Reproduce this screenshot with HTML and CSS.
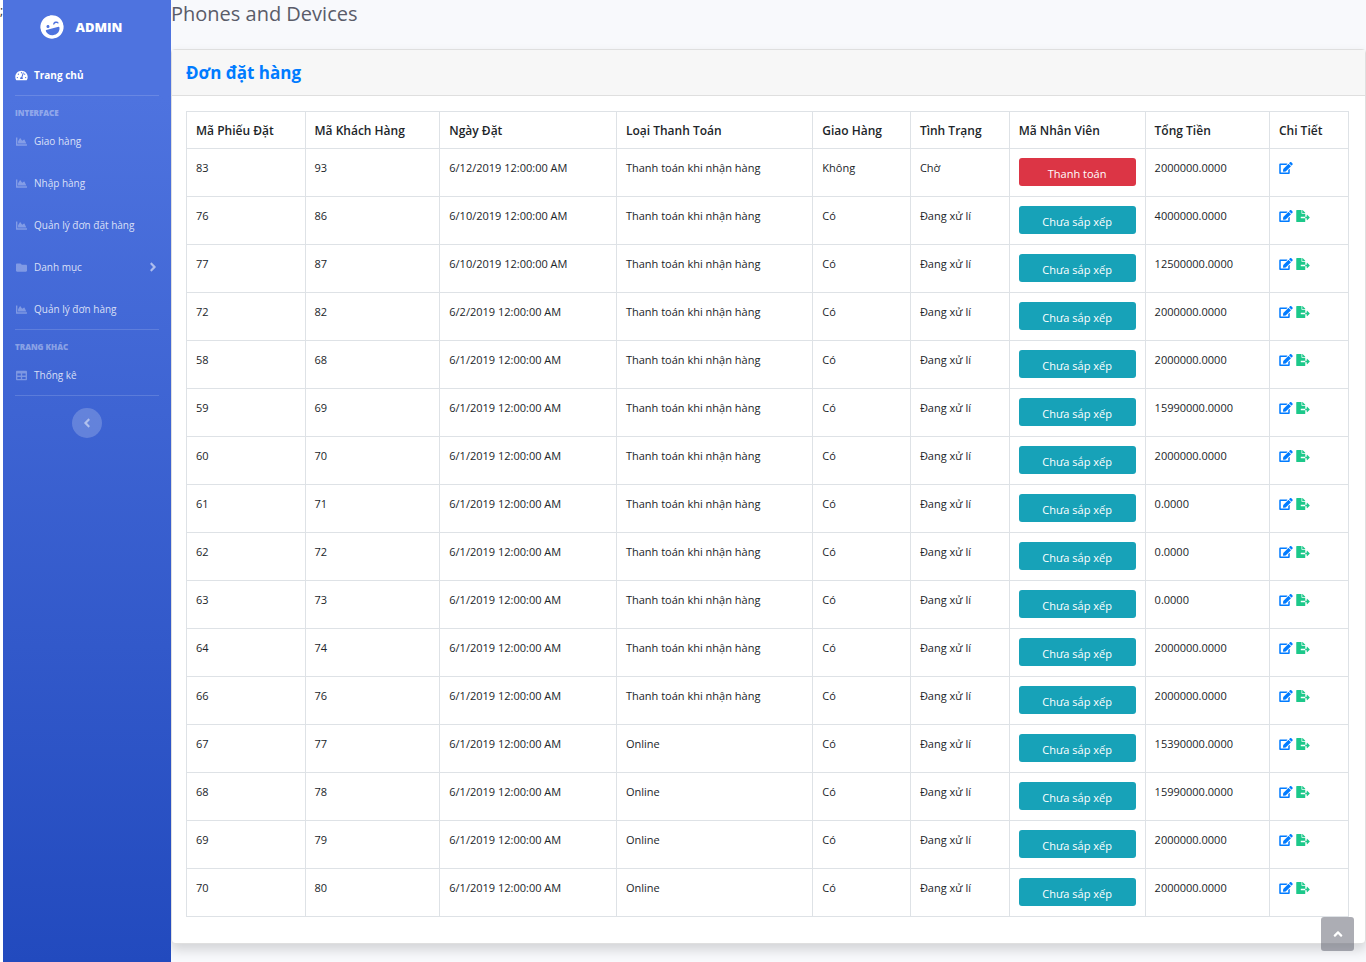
FILE: index.html
```html
<!DOCTYPE html>
<html lang="vi">

<head>
  <meta charset="UTF-8">
  <meta name="viewport" content="width=device-width, initial-scale=1.0">
  <title>Admin - Đơn đặt hàng</title>
  <link rel="stylesheet" href="styles.css">
</head>

<body>
  <svg class="sprite" aria-hidden="true">
    <symbol id="i-laugh" viewBox="0 0 496 512"><path d="M248 8C111 8 0 119 0 256s111 248 248 248 248-111 248-248S385 8 248 8zm40 196c4-25.2 34.2-42.1 59.8-42.1s55.9 16.9 59.9 42.1c1.7 11.1-11.4 18.3-19.8 10.8l-9.5-8.5c-14.8-13.2-46.2-13.2-61 0l-9.5 8.5c-8.5 7.4-21.6.1-19.9-10.8zm-120-12c17.7 0 32 14.3 32 32s-14.3 32-32 32-32-14.3-32-32 14.3-32 32-32zm88 240h-16c-73.4 0-134-55-142.9-126-1.2-9.5 6.3-18 15.9-18h270c9.6 0 17.1 8.4 15.9 18-8.9 71-69.5 126-142.9 126z"/></symbol>
    <symbol id="i-tachometer" viewBox="0 0 576 512"><path d="M288 32C128.94 32 0 160.94 0 320c0 52.8 14.25 102.26 39.06 144.8 5.61 9.62 16.3 15.2 27.44 15.2h443c11.14 0 21.83-5.58 27.44-15.2C561.75 422.26 576 372.8 576 320c0-159.06-128.94-288-288-288zm0 64c14.71 0 26.58 10.13 30.32 23.65-1.11 2.26-2.64 4.23-3.45 6.67l-9.22 27.67c-5.13 3.49-10.97 6.01-17.64 6.01-17.67 0-32-14.33-32-32S270.33 96 288 96zM96 384c-17.67 0-32-14.33-32-32s14.33-32 32-32 32 14.33 32 32-14.33 32-32 32zm48-160c-17.67 0-32-14.33-32-32s14.33-32 32-32 32 14.33 32 32-14.33 32-32 32zm246.77-72.41l-61.33 184C343.13 347.33 352 364.54 352 384c0 11.72-3.38 22.55-8.88 32H232.88c-5.5-9.45-8.88-20.28-8.88-32 0-33.94 26.5-61.43 59.9-63.59l61.34-184.01c4.17-12.56 17.73-19.45 30.36-15.17 12.57 4.19 19.35 17.79 15.17 30.36zm14.66 57.2l15.52-46.55c3.47-1.29 7.13-2.23 11.05-2.23 17.67 0 32 14.33 32 32s-14.33 32-32 32c-11.38-.01-20.89-6.28-26.57-15.22zM480 384c-17.67 0-32-14.33-32-32s14.33-32 32-32 32 14.33 32 32-14.33 32-32 32z"/></symbol>
    <symbol id="i-chart" viewBox="0 0 512 512"><path d="M500 384c6.6 0 12 5.4 12 12v40c0 6.6-5.4 12-12 12H12c-6.6 0-12-5.4-12-12V76c0-6.6 5.4-12 12-12h40c6.6 0 12 5.4 12 12v308h436zM372.7 159.5L288 216l-85.3-113.7c-5.1-6.8-15.5-6.3-19.9 1L96 248v104h384l-89.9-187.8c-3.2-6.5-11.4-8.7-17.4-4.7z"/></symbol>
    <symbol id="i-folder" viewBox="0 0 512 512"><path d="M464 128H272l-64-64H48C21.49 64 0 85.49 0 112v288c0 26.51 21.49 48 48 48h416c26.51 0 48-21.49 48-48V176c0-26.51-21.49-48-48-48z"/></symbol>
    <symbol id="i-table" viewBox="0 0 512 512"><path d="M464 32H48C21.49 32 0 53.49 0 80v352c0 26.51 21.49 48 48 48h416c26.51 0 48-21.49 48-48V80c0-26.51-21.49-48-48-48zM224 416H64v-96h160v96zm0-160H64v-96h160v96zm224 160H288v-96h160v96zm0-160H288v-96h160v96z"/></symbol>
    <symbol id="i-angle" viewBox="0 0 256 512"><path d="M224.3 273l-136 136c-9.4 9.4-24.6 9.4-33.9 0l-22.6-22.6c-9.4-9.4-9.4-24.6 0-33.9l96.4-96.4-96.4-96.4c-9.4-9.4-9.4-24.6 0-33.9L54.3 103c9.4-9.4 24.6-9.4 33.9 0l136 136c9.5 9.4 9.5 24.6.1 34z"/></symbol>
    <symbol id="i-edit" viewBox="0 0 576 512"><path d="M402.6 83.2l90.2 90.2c3.8 3.8 3.8 10 0 13.8L274.4 405.6l-92.8 10.3c-12.4 1.4-22.9-9.1-21.5-21.5l10.3-92.8L388.8 83.2c3.8-3.8 10-3.8 13.8 0zm162-22.9l-48.8-48.8c-15.2-15.2-39.9-15.2-55.2 0l-35.4 35.4c-3.8 3.8-3.8 10 0 13.8l90.2 90.2c3.8 3.8 10 3.8 13.8 0l35.4-35.4c15.2-15.3 15.2-40 0-55.2zM384 346.2V448H64V128h229.8c3.2 0 6.2-1.3 8.5-3.5l40-40c7.6-7.6 2.2-20.5-8.5-20.5H48C21.5 64 0 85.5 0 112v352c0 26.5 21.5 48 48 48h352c26.5 0 48-21.5 48-48V306.2c0-10.7-12.9-16-20.5-8.5l-40 40c-2.2 2.3-3.5 5.3-3.5 8.5z"/></symbol>
    <symbol id="i-export" viewBox="0 0 576 512"><path d="M384 121.9c0-6.3-2.5-12.4-7-16.9L279.1 7c-4.5-4.5-10.6-7-17-7H256v128h128zM571 308l-95.7-96.4c-10.1-10.1-27.4-3-27.4 11.3V288h-64v64h64v65.2c0 14.3 17.3 21.4 27.4 11.3L571 332c6.6-6.6 6.6-17.4 0-24zm-379 28v-32c0-8.8 7.2-16 16-16h176V160H248c-13.2 0-24-10.8-24-24V0H24C10.7 0 0 10.7 0 24v464c0 13.3 10.7 24 24 24h336c13.3 0 24-10.7 24-24V352H208c-8.8 0-16-7.2-16-16z"/></symbol>
  </svg>

  <div class="wrapper">
    <span class="stray">;</span>

    <nav class="sidebar">
      <a class="brand" href="#">
        <svg class="brand-icon"><use href="#i-laugh"/></svg>
        <span>ADMIN</span>
      </a>
      <a class="nav-link active" href="#"><svg><use href="#i-tachometer"/></svg><span>Trang chủ</span></a>
      <hr>
      <div class="heading">INTERFACE</div>
      <a class="nav-link" href="#"><svg><use href="#i-chart"/></svg><span>Giao hàng</span></a>
      <a class="nav-link" href="#"><svg><use href="#i-chart"/></svg><span>Nhập hàng</span></a>
      <a class="nav-link" href="#"><svg><use href="#i-chart"/></svg><span>Quản lý đơn đặt hàng</span></a>
      <a class="nav-link" href="#"><svg><use href="#i-folder"/></svg><span>Danh mục</span><svg class="arrow"><use href="#i-angle"/></svg></a>
      <a class="nav-link" href="#"><svg><use href="#i-chart"/></svg><span>Quản lý đơn hàng</span></a>
      <hr>
      <div class="heading">TRANG KHÁC</div>
      <a class="nav-link" href="#"><svg><use href="#i-table"/></svg><span>Thống kê</span></a>
      <hr>
      <button class="toggle" aria-label="Thu gọn"><svg><use href="#i-angle"/></svg></button>
    </nav>

    <main class="content">
      <h1>Phones and Devices</h1>
      <div class="card">
        <div class="card-header">
          <h2>Đơn đặt hàng</h2>
        </div>
        <div class="card-body">
          <table>
            <colgroup>
              <col class="c-ma">
              <col class="c-khach">
              <col class="c-ngay">
              <col class="c-loai">
              <col class="c-giao">
              <col class="c-tinh">
              <col class="c-nv">
              <col class="c-tien">
              <col class="c-ct">
            </colgroup>
            <thead>
              <tr>
                <th>Mã Phiếu Đặt</th>
                <th>Mã Khách Hàng</th>
                <th>Ngày Đặt</th>
                <th>Loại Thanh Toán</th>
                <th>Giao Hàng</th>
                <th>Tình Trạng</th>
                <th>Mã Nhân Viên</th>
                <th>Tổng Tiền</th>
                <th>Chi Tiết</th>
              </tr>
            </thead>
            <tbody id="orders"></tbody>
          </table>
        </div>
      </div>
    </main>
  </div>

  <a class="scroll-top" href="#" aria-label="Lên đầu trang"><svg><use href="#i-angle"/></svg></a>

  <script src="script.js"></script>
</body>

</html>
```

FILE: styles.css
```css
* {
  box-sizing: border-box;
}

body {
  margin: 0;
  font-family: "Open Sans", "Noto Sans", sans-serif;
  font-size: 12px;
  line-height: 18px;
  color: #212529;
  background: #fff;
}

a {
  text-decoration: none;
}

svg {
  fill: currentColor;
  flex-shrink: 0;
}

.sprite {
  display: none;
}

.wrapper {
  display: flex;
  min-height: 100vh;
}

.stray {
  width: 3px;
  flex-shrink: 0;
  line-height: 22px;
}

/* sidebar */
.sidebar {
  width: 168px;
  flex-shrink: 0;
  display: flex;
  flex-direction: column;
  background: linear-gradient(180deg, #4e73df 10%, #224abe 100%);
}

.brand {
  display: flex;
  align-items: center;
  justify-content: center;
  gap: 12px;
  height: 54px;
  padding-right: 12px;
  color: #fff;
  font-size: 13px;
  font-weight: 800;
}

.brand-icon {
  width: 24px;
  height: 24px;
  transform: rotate(-15deg);
}

.nav-link {
  display: flex;
  align-items: center;
  gap: 6px;
  height: 42px;
  padding: 0 12px;
  font-size: 10px;
  color: rgba(255, 255, 255, 0.8);
}

.nav-link svg {
  width: 13px;
  height: 11px;
  opacity: 0.4;
}

.nav-link.active {
  color: #fff;
  font-weight: 700;
}

.nav-link.active svg {
  opacity: 1;
}

.nav-link .arrow {
  width: 12px;
  height: 14px;
  margin-left: auto;
  opacity: 0.7;
}

.sidebar hr {
  width: 144px;
  margin: -1px auto 12px;
  border: 0;
  border-top: 1px solid rgba(255, 255, 255, 0.15);
}

.heading {
  padding: 0 12px 2px;
  font-size: 8px;
  line-height: 10px;
  font-weight: 800;
  color: rgba(255, 255, 255, 0.4);
}

.toggle {
  display: flex;
  align-items: center;
  justify-content: center;
  align-self: center;
  width: 30px;
  height: 30px;
  padding: 0;
  border: 0;
  border-radius: 50%;
  background: rgba(255, 255, 255, 0.2);
  color: rgba(255, 255, 255, 0.5);
  cursor: pointer;
}

.toggle svg {
  width: 12px;
  height: 14px;
  transform: rotate(180deg);
}

/* content */
.content {
  flex: 1;
  min-width: 0;
  overflow: hidden;
  background: #f8f9fc;
}

h1 {
  margin: 0 0 22px;
  font-size: 20px;
  line-height: 27px;
  font-weight: 400;
  color: #5a5c69;
}

.card {
  background: #fff;
  border: 1px solid #dfdfdf;
  border-radius: 4px;
  box-shadow: 0 6px 12px rgba(0, 0, 0, 0.15);
}

.card-header {
  padding: 11px 14px;
  background: #f7f7f7;
  border-bottom: 1px solid #dfdfdf;
}

h2 {
  margin: 0;
  font-size: 17px;
  line-height: 23px;
  font-weight: 700;
  color: #007bff;
}

.card-body {
  padding: 15px 16px 26px 14px;
}

table {
  width: 100%;
  table-layout: fixed;
  border-collapse: collapse;
}

th,
td {
  padding: 10px 9px 8px;
  border: 1px solid #dee2e6;
  text-align: left;
  vertical-align: top;
  white-space: nowrap;
}

th {
  font-weight: 600;
}

td {
  font-size: 11px;
}

td.staff {
  padding: 9px;
}

.c-ma { width: 10.2%; }
.c-khach { width: 11.6%; }
.c-ngay { width: 15.2%; }
.c-loai { width: 16.9%; }
.c-giao { width: 8.4%; }
.c-tinh { width: 8.5%; }
.c-nv { width: 11.7%; }
.c-tien { width: 10.7%; }
.c-ct { width: 6.8%; }

.btn {
  display: block;
  width: 100%;
  height: 28px;
  margin-bottom: 1px;
  padding: 2px 0 0;
  border: 0;
  border-radius: 3px;
  font-family: inherit;
  font-size: 11px;
  color: #fff;
  cursor: pointer;
}

.btn-info {
  background: #17a2b8;
}

.btn-danger {
  background: #dc3545;
}

.actions {
  display: flex;
  gap: 3px;
  padding-top: 3px;
}

.actions svg {
  display: block;
  width: 14px;
  height: 12px;
}

.edit {
  color: #007bff;
}

.export {
  color: #1cc88a;
}

.scroll-top {
  position: fixed;
  right: 12px;
  bottom: 11px;
  display: flex;
  align-items: center;
  justify-content: center;
  width: 33px;
  height: 34px;
  border-radius: 3px;
  background: rgba(90, 92, 105, 0.5);
  color: #fff;
}

.scroll-top svg {
  width: 12px;
  height: 14px;
  transform: rotate(-90deg);
}
```

FILE: script.js
```js
const cod = 'Thanh toán khi nhận hàng';

// mã phiếu, mã khách, ngày, loại thanh toán, tổng tiền
const orders = [
  [83, 93, '6/12/2019', cod, '2000000.0000'],
  [76, 86, '6/10/2019', cod, '4000000.0000'],
  [77, 87, '6/10/2019', cod, '12500000.0000'],
  [72, 82, '6/2/2019', cod, '2000000.0000'],
  [58, 68, '6/1/2019', cod, '2000000.0000'],
  [59, 69, '6/1/2019', cod, '15990000.0000'],
  [60, 70, '6/1/2019', cod, '2000000.0000'],
  [61, 71, '6/1/2019', cod, '0.0000'],
  [62, 72, '6/1/2019', cod, '0.0000'],
  [63, 73, '6/1/2019', cod, '0.0000'],
  [64, 74, '6/1/2019', cod, '2000000.0000'],
  [66, 76, '6/1/2019', cod, '2000000.0000'],
  [67, 77, '6/1/2019', 'Online', '15390000.0000'],
  [68, 78, '6/1/2019', 'Online', '15990000.0000'],
  [69, 79, '6/1/2019', 'Online', '2000000.0000'],
  [70, 80, '6/1/2019', 'Online', '2000000.0000']
];

document.getElementById('orders').innerHTML = orders.map(([id, khach, ngay, loai, tien]) => {
  const cho = id === 83;
  const nut = cho
    ? '<button class="btn btn-danger">Thanh toán</button>'
    : '<button class="btn btn-info">Chưa sắp xếp</button>';
  const xuat = cho ? '' : '<a class="export" href="#" aria-label="Xuất"><svg><use href="#i-export"/></svg></a>';

  return `
    <tr>
      <td>${id}</td>
      <td>${khach}</td>
      <td>${ngay} 12:00:00 AM</td>
      <td>${loai}</td>
      <td>${cho ? 'Không' : 'Có'}</td>
      <td>${cho ? 'Chờ' : 'Đang xử lí'}</td>
      <td class="staff">${nut}</td>
      <td>${tien}</td>
      <td><div class="actions"><a class="edit" href="#" aria-label="Sửa"><svg><use href="#i-edit"/></svg></a>${xuat}</div></td>
    </tr>`;
}).join('');
```
